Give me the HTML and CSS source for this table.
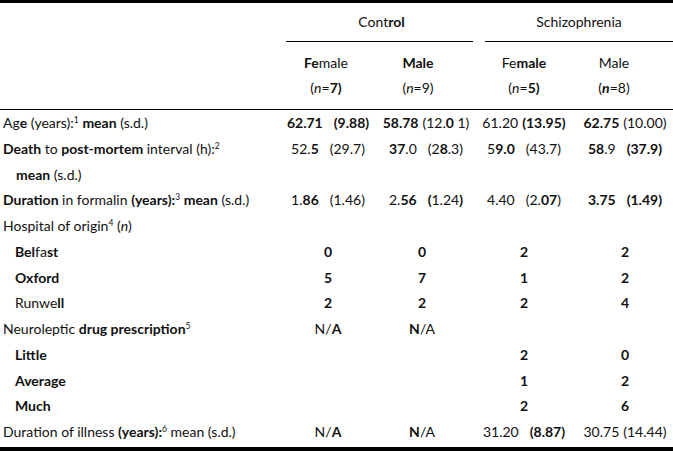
FILE: index.html
```html
<!DOCTYPE html>
<html lang="en">
<head>
<meta charset="utf-8">
<title>Table</title>
<link rel="stylesheet" href="styles.css">
</head>
<body>
<div class="tbl">
  <div class="head">
    <div class="grp g-control">Cont<b>rol</b></div>
    <div class="grp g-schizo">Schizophrenia</div>
    <div class="rule r-control"></div>
    <div class="rule r-schizo"></div>
    <div class="sub s1"><b>Fe</b>male<br>(<i>n</i>=<b>7)</b></div>
    <div class="sub s2"><b>Male</b><br>(<i>n</i>=9)</div>
    <div class="sub s3">Fe<b>male</b><br>(<i>n</i>=<b>5)</b></div>
    <div class="sub s4">Male<br>(<b><i>n</i></b>=8)</div>
  </div>
  <div class="body">
    <div class="row">
      <div class="lab">Ag<b>e</b> (years):<sup>1</sup> <b>mean</b> (s.d.)</div>
      <div class="num"><span class="v"><b>62.71</b></span><span class="sd w3"><b>(9.88)</b></span></div>
      <div class="num pair"><span class="v"><b>58.78</b></span><span class="sd w1">(12.<b>0</b> 1)</span></div>
      <div class="num"><span class="v">61.20</span><span class="sd w1"><b>(13.95)</b></span></div>
      <div class="num"><span class="v"><b>62.75</b></span><span class="sd w1">(10.00)</span></div>
    </div>
    <div class="row two">
      <div class="lab"><b>Death</b> to <b>post-mortem</b> interval (h):<sup>2</sup><br><span class="ind"><b>mean</b> (s.d.)</span></div>
      <div class="num"><span class="v">52.<b>5</b></span><span class="sd w3">(29.7)</span></div>
      <div class="num pair"><span class="v"><b>37</b>.0</span><span class="sd w3">(2<b>8</b>.3)</span></div>
      <div class="num"><span class="v">5<b>9.0</b></span><span class="sd w3">(43.7)</span></div>
      <div class="num"><span class="v"><b>58</b>.9</span><span class="sd w3"><b>(37.9)</b></span></div>
    </div>
    <div class="row">
      <div class="lab"><b>Duration</b> in formalin <b>(years):</b><sup>3</sup> <b>mean</b> (s.d.)</div>
      <div class="num"><span class="v">1.<b>86</b></span><span class="sd w3">(1.46)</span></div>
      <div class="num pair"><span class="v">2.<b>56</b></span><span class="sd w3"><b>(</b>1.24<b>)</b></span></div>
      <div class="num"><span class="v">4.40</span><span class="sd w3">(2.<b>07</b>)</span></div>
      <div class="num"><span class="v"><b>3.75</b></span><span class="sd w3"><b>(1.49)</b></span></div>
    </div>
    <div class="row">
      <div class="lab">Hospital of origin<sup>4</sup> (<i>n</i>)</div>
    </div>
    <div class="row">
      <div class="lab ind"><b>Bel</b>fa<b>st</b></div>
      <div class="num"><b>0</b></div>
      <div class="num"><b>0</b></div>
      <div class="num"><b>2</b></div>
      <div class="num"><b>2</b></div>
    </div>
    <div class="row">
      <div class="lab ind"><b>Oxford</b></div>
      <div class="num"><b>5</b></div>
      <div class="num"><b>7</b></div>
      <div class="num"><b>1</b></div>
      <div class="num"><b>2</b></div>
    </div>
    <div class="row">
      <div class="lab ind">Runwe<b>ll</b></div>
      <div class="num"><b>2</b></div>
      <div class="num"><b>2</b></div>
      <div class="num"><b>2</b></div>
      <div class="num"><b>4</b></div>
    </div>
    <div class="row">
      <div class="lab">Neuroleptic <b>drug prescription</b><sup>5</sup></div>
      <div class="num">N/<b>A</b></div>
      <div class="num"><b>N</b>/A</div>
      <div class="num"></div>
      <div class="num"></div>
    </div>
    <div class="row">
      <div class="lab ind"><b>Little</b></div>
      <div class="num"></div>
      <div class="num"></div>
      <div class="num"><b>2</b></div>
      <div class="num"><b>0</b></div>
    </div>
    <div class="row">
      <div class="lab ind"><b>Average</b></div>
      <div class="num"></div>
      <div class="num"></div>
      <div class="num"><b>1</b></div>
      <div class="num"><b>2</b></div>
    </div>
    <div class="row">
      <div class="lab ind"><b>Much</b></div>
      <div class="num"></div>
      <div class="num"></div>
      <div class="num"><b>2</b></div>
      <div class="num"><b>6</b></div>
    </div>
    <div class="row">
      <div class="lab">Duration of illness <b>(years):</b><sup>6</sup> mean (s.d.)</div>
      <div class="num">N/<b>A</b></div>
      <div class="num"><b>N</b>/A</div>
      <div class="num"><span class="v">31.20</span><span class="sd w3"><b>(8.87)</b></span></div>
      <div class="num"><span class="v">30.75</span><span class="sd w1">(14.44)</span></div>
    </div>
  </div>
</div>
</body>
</html>
```
FILE: styles.css
```css
html, body {
  margin: 0;
  padding: 0;
  background: #ffffff;
}
body {
  font-family: "Lato", "Open Sans", "DejaVu Sans", sans-serif;
  font-size: 14px;
  color: #111111;
  width: 673px;
}
b { font-weight: 700; }
sup {
  font-size: 8.5px;
  line-height: 0;
  vertical-align: 5px;
}
.tbl {
  border-top: 3px solid #000;
  border-bottom: 4px solid #000;
}
.head {
  display: grid;
  grid-template-columns: 283px 86px 104px 12px 84px 104px;
  grid-template-rows: 38px 1px 67px;
  border-bottom: 1px solid #000;
}
.grp {
  grid-row: 1;
  text-align: center;
  align-self: center;
  line-height: 16px;
}
.g-control { grid-column: 2 / 4; padding-left: 7px; }
.g-schizo { grid-column: 5 / 7; }
.rule {
  grid-row: 2;
  background: #000;
  height: 1px;
}
.r-control { grid-column: 2 / 4; margin-left: 3px; }
.r-schizo { grid-column: 5 / 7; }
.sub {
  grid-row: 3;
  text-align: center;
  line-height: 25px;
  padding-top: 8px;
}
.s1 { grid-column: 2; }
.s2 { grid-column: 3; padding-right: 6px; }
.s3 { grid-column: 5; padding-right: 6px; }
.s4 { grid-column: 6; padding-right: 14px; }

.body {
  padding-bottom: 2px;
}
.row {
  display: grid;
  grid-template-columns: 278px 100px 88px 116px 86px 5px;
  height: 25.75px;
  line-height: 25.75px;
  white-space: nowrap;
}
.row.two { height: 51.5px; }
.lab { padding-left: 3px; }
.lab.ind { padding-left: 15px; }
.ind { padding-left: 13px; }
.num {
  display: flex;
  justify-content: center;
  align-items: flex-start;
}
.num.pair { padding-left: 8px; }
.sd.w1 { margin-left: 4px; }
.sd.w3 { margin-left: 11px; }
```
